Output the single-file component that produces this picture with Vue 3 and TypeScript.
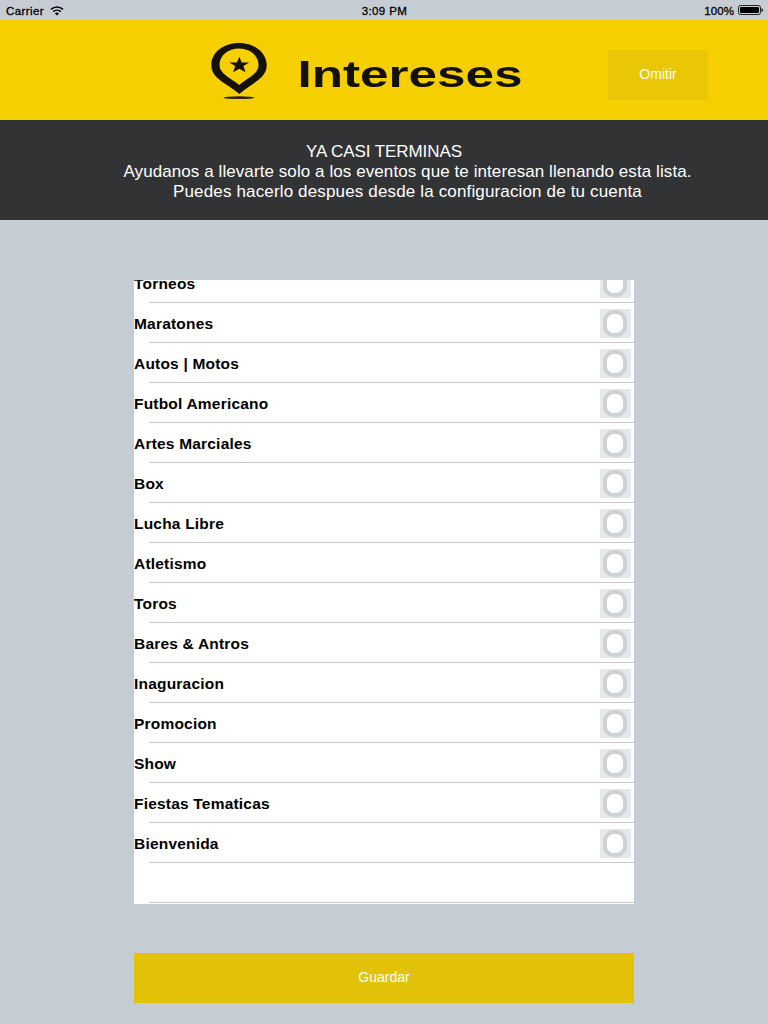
<script setup lang="ts">
const interests: string[] = [
  'Torneos', 'Maratones', 'Autos | Motos', 'Futbol Americano', 'Artes Marciales',
  'Box', 'Lucha Libre', 'Atletismo', 'Toros', 'Bares & Antros', 'Inaguracion',
  'Promocion', 'Show', 'Fiestas Tematicas', 'Bienvenida', '',
]
</script>

<template>
  <div class="screen">
    <div class="status">
      <div class="carrier">
        <span>Carrier</span>
        <svg class="wifi" width="14" height="10" viewBox="0 0 14 10" fill="none" stroke="#000">
          <path d="M1 3.4C4.4.2 9.6.2 13 3.4" stroke-width="1.6" />
          <path d="M3.2 5.7C5.4 3.7 8.6 3.7 10.800 5.7" stroke-width="1.6" />
          <path d="M7 9.5L4.8 7.3Q7 5.5 9.2 7.3Z" fill="#000" stroke="none" />
        </svg>
      </div>
      <span class="clock">3:09 PM</span>
      <div class="power">
        <span>100%</span>
        <svg width="25" height="10" viewBox="0 0 25 10">
          <rect x=".5" y=".5" width="22" height="9" rx="2" fill="none" stroke="#222" />
          <rect x="2" y="2" width="19" height="6" rx=".8" />
          <path d="M23.500 3.200Q25 3.600 25 5T23.500 6.800Z" />
        </svg>
      </div>
    </div>

    <header class="header">
      <svg class="brand" width="330" height="70" viewBox="0 0 330 70">
        <path
          fill="#14110a"
          fill-rule="evenodd"
          d="M34 8C18 8 6.300 18 6.300 30C6.300 44 22 48 34.300 59C46 48 61.700 44 61.700 30C61.700 18 50 8 34 8ZM34 13.500C23 13.500 14.500 20.500 14.500 30C14.500 39 25 42.500 34.200 50C43 42.500 53.500 39 53.500 30C53.500 20.500 45 13.500 34 13.500Z"
        />
        <path d="M34.300 21.700L36.700 27.500H44.200L38.400 31.100L40.500 37.300L34.300 33.700L28.100 37.300L30.200 31.100L24.400 27.500H31.900Z" fill="#14110a" />
        <ellipse cx="34" cy="62.700" rx="15.500" ry="1.400" fill="#2d2703" />
        <text x="92.500" y="52" textLength="225" lengthAdjust="spacingAndGlyphs">Intereses</text>
      </svg>
      <button class="skip">Omitir</button>
    </header>

    <section class="intro">
      <p class="title">YA CASI TERMINAS</p>
      <p class="line first">Ayudanos a llevarte solo a los eventos que te interesan llenando esta lista.</p>
      <p class="line second">Puedes hacerlo despues desde la configuracion de tu cuenta</p>
    </section>

    <main class="list">
      <div class="rows">
        <div v-for="(name, i) in interests" :key="i" class="row">
          <span class="name">{{ name }}</span>
          <span v-if="name" class="check"><span class="ring"></span></span>
        </div>
      </div>
    </main>

    <button class="save">Guardar</button>
  </div>
</template>

<style>
body { margin: 0; background: #c5ccd4; }
</style>

<style scoped>
.screen {
  width: 768px;
  height: 1024px;
  overflow: hidden;
  background: #c5ccd4;
  font-family: "Liberation Sans", Arial, sans-serif;
}
button { border: 0; padding: 0 0 2px; font-family: inherit; color: #fff; }
.status {
  display: grid;
  grid-template-columns: 1fr auto 1fr;
  height: 20px;
  padding: 2px 5px 0 6px;
  box-sizing: border-box;
  font-size: 11.500px;
  line-height: 18px;
  color: #000;
  -webkit-text-stroke: .3px #000;
}
.carrier, .power { display: flex; align-items: center; }
.carrier { gap: 6px; letter-spacing: .4px; }
.wifi { margin-top: -1px; }
.clock { letter-spacing: .4px; }
.power { justify-content: flex-end; gap: 4px; letter-spacing: .1px; }
.power svg { margin-top: -2px; }
.header {
  display: flex;
  justify-content: space-between;
  align-items: center;
  height: 100px;
  padding: 0 60px 0 205px;
  box-sizing: border-box;
  background: #f5cf00;
}
.brand { overflow: visible; filter: blur(.6px); }
.brand text { font-size: 37.500px; font-weight: 700; fill: #14110a; }
.skip {
  width: 100px;
  height: 50px;
  margin-top: 10px;
  background: #e9c706;
  font-size: 14px;
}
.intro {
  height: 100px;
  padding-top: 22px;
  box-sizing: border-box;
  background: #323335;
  color: #fff;
  font-size: 17px;
  line-height: 20px;
  text-align: center;
  white-space: nowrap;
}
.intro p { margin: 0; }
.title { letter-spacing: -.08px; }
.line { padding-left: 47px; }
.first { letter-spacing: .08px; }
.second { letter-spacing: .15px; }
.list {
  display: flow-root;
  width: 500px;
  height: 624px;
  margin: 60px auto 0;
  overflow: hidden;
  background: #fff;
}
.rows { margin-top: -17px; }
.row {
  display: flex;
  justify-content: space-between;
  height: 40px;
  background: linear-gradient(#c8c7cc, #c8c7cc) 15px 39px / 485px 1px no-repeat;
}
.name {
  font-size: 15.500px;
  font-weight: 700;
  line-height: 41px;
  letter-spacing: .2px;
  color: #000;
}
.check {
  display: flex;
  justify-content: center;
  width: 31px;
  height: 29px;
  margin: 6px 3px 0 0;
  background: #e5e9ee;
  filter: blur(.5px);
}
.ring {
  width: 16px;
  height: 19px;
  margin: 1px 1px 0 0;
  border: 4px solid #d0d1d2;
  border-radius: 11px;
  background: #fff;
}
.save {
  display: block;
  width: 500px;
  height: 50px;
  margin: 49px auto 0;
  background: #e2c109;
  font-size: 14px;
}
</style>
